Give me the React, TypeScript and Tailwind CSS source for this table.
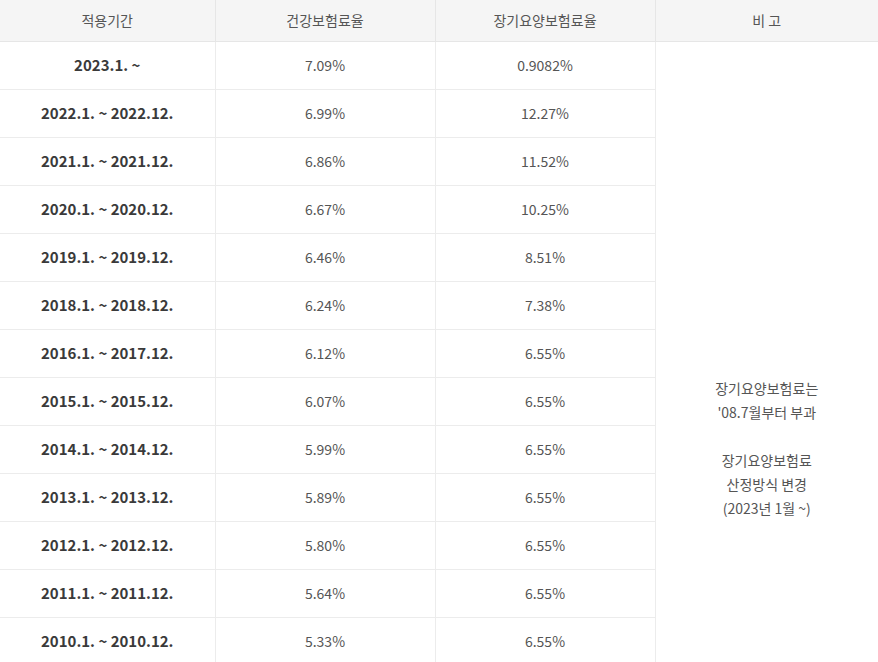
import React from "react";

const rows: [string, string, string][] = [
  ["2023.1. ~", "7.09%", "0.9082%"],
  ["2022.1. ~ 2022.12.", "6.99%", "12.27%"],
  ["2021.1. ~ 2021.12.", "6.86%", "11.52%"],
  ["2020.1. ~ 2020.12.", "6.67%", "10.25%"],
  ["2019.1. ~ 2019.12.", "6.46%", "8.51%"],
  ["2018.1. ~ 2018.12.", "6.24%", "7.38%"],
  ["2016.1. ~ 2017.12.", "6.12%", "6.55%"],
  ["2015.1. ~ 2015.12.", "6.07%", "6.55%"],
  ["2014.1. ~ 2014.12.", "5.99%", "6.55%"],
  ["2013.1. ~ 2013.12.", "5.89%", "6.55%"],
  ["2012.1. ~ 2012.12.", "5.80%", "6.55%"],
  ["2011.1. ~ 2011.12.", "5.64%", "6.55%"],
  ["2010.1. ~ 2010.12.", "5.33%", "6.55%"],
];

export default function App() {
  return (
    <div className="w-[878px] h-[662px] overflow-hidden bg-white" style={{ fontFamily: '"Noto Sans CJK KR", "Noto Sans", sans-serif' }}>
      <table className="w-[878px] table-fixed border-collapse text-[14px]">
        <colgroup>
          <col className="w-[215px]" />
          <col className="w-[220px]" />
          <col className="w-[220px]" />
          <col className="w-[223px]" />
        </colgroup>
        <thead>
          <tr className="h-[41px] bg-[#f5f5f5]">
            <th className="border-b border-[#e6e6e6] font-normal text-[#555]">적용기간</th>
            <th className="border-b border-l border-[#e6e6e6] font-normal text-[#555]">건강보험료율</th>
            <th className="border-b border-l border-[#e6e6e6] font-normal text-[#555]">장기요양보험료율</th>
            <th className="border-b border-l border-[#e6e6e6] font-normal text-[#555]">비 고</th>
          </tr>
        </thead>
        <tbody>
          {rows.map((r, i) => (
            <tr key={i} className="h-[48px]">
              <td className="border-b border-[#ececec] text-center text-[15px] font-semibold text-[#3a3a3a]">{r[0]}</td>
              <td className="border-b border-l border-[#ececec] text-center text-[#555]">{r[1]}</td>
              <td className="border-b border-l border-[#ececec] text-center text-[#555]">{r[2]}</td>
              {i === 0 && (
                <td rowSpan={rows.length} className="border-l border-[#ececec] pt-[334px] text-center align-top text-[#555] leading-[24px]">
                  장기요양보험료는
                  <br />
                  '08.7월부터 부과
                  <br />
                  <br />
                  장기요양보험료
                  <br />
                  산정방식 변경
                  <br />
                  (2023년 1월 ~)
                </td>
              )}
            </tr>
          ))}
        </tbody>
      </table>
    </div>
  );
}
